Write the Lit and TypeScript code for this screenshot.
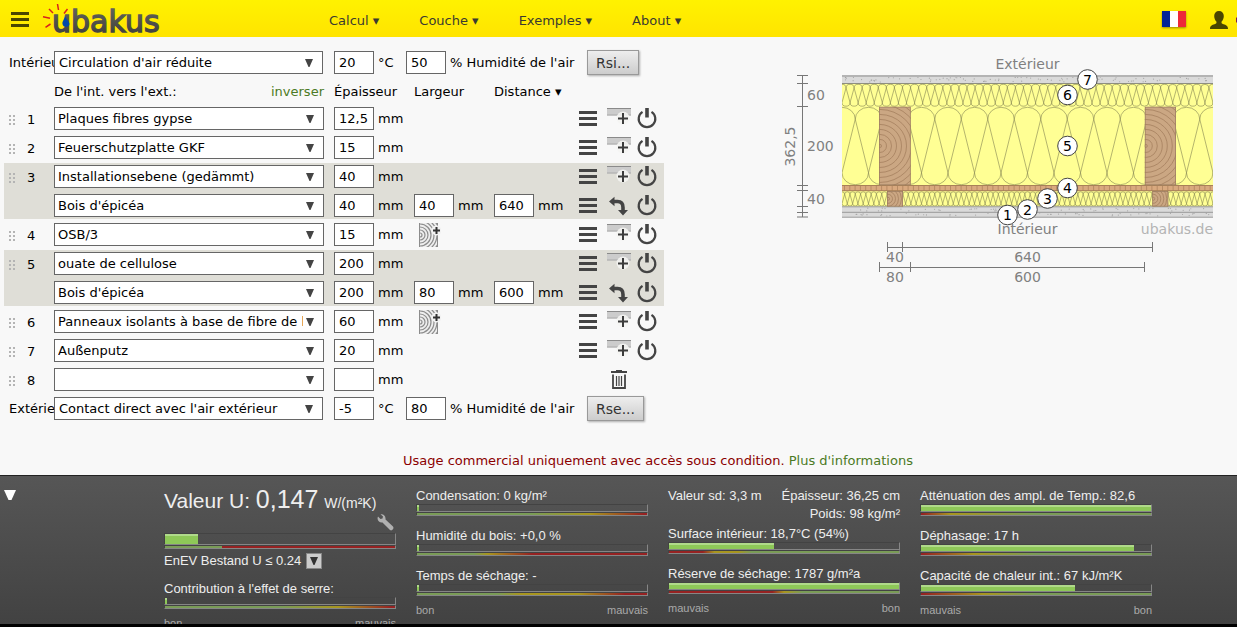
import { LitElement, html, svg, css, nothing } from "lit";
import { customElement, property } from "lit/decorators.js";

interface Layer {
  name: string;
  thickness: string;
  width?: string;
  distance?: string;
  canAddWood?: boolean;
  empty?: boolean;
}

interface Gauge {
  label: string;
  fill: number;
  scale: string;
}

const GROUPS: Layer[][] = [
  [{ name: "Plaques fibres gypse", thickness: "12,5" }],
  [{ name: "Feuerschutzplatte GKF", thickness: "15" }],
  [
    { name: "Installationsebene (gedämmt)", thickness: "40" },
    { name: "Bois d'épicéa", thickness: "40", width: "40", distance: "640" },
  ],
  [{ name: "OSB/3", thickness: "15", canAddWood: true }],
  [
    { name: "ouate de cellulose", thickness: "200" },
    { name: "Bois d'épicéa", thickness: "200", width: "80", distance: "600" },
  ],
  [{ name: "Panneaux isolants à base de fibre de bois", thickness: "60", canAddWood: true }],
  [{ name: "Außenputz", thickness: "20" }],
  [{ name: "", thickness: "", empty: true }],
];

const GREEN = "#7a9c57";
const AMBER = "#a8961f";
const RED = "#962222";

const reset = css`
  * { box-sizing: border-box; }
  :host { box-sizing: border-box; }
  button {
    font: inherit;
    color: inherit;
    background: none;
    border: 0;
    padding: 0;
    margin: 0;
    cursor: pointer;
  }
  svg { display: block; }
`;

@customElement("top-bar")
export class TopBar extends LitElement {
  static styles = [
    reset,
    css`
      :host {
        display: flex;
        align-items: center;
        height: 37px;
        background: linear-gradient(#fff200, #ffe400);
        color: #4a4600;
        font: 13px/20px "DejaVu Sans", sans-serif;
        overflow: hidden;
      }
      .brand { display: flex; align-items: center; width: 329px; padding-left: 11px; gap: 12px; }
      nav { display: flex; gap: 40px; flex: 1; padding-top: 4px; color: #3a3a30; }
      .account { display: flex; align-items: center; gap: 24px; }
      .flag { box-shadow: 0 1px 2px rgba(0, 0, 0, 0.4); }
      .user { display: flex; gap: 8px; align-items: center; padding-top: 2px; }
      .logo { font: 30px "DejaVu Sans", sans-serif; }
    `,
  ];

  render() {
    return html`
      <div class="brand">
        <button aria-label="Menu">
          <svg width="18" height="16" viewBox="0 0 18 16" fill="#4a4500">
            <path d="M0 1h18v3H0zM0 7h18v3H0zM0 13h18v3H0z" />
          </svg>
        </button>
        <a href="#" aria-label="ubakus">
          <svg width="120" height="37" viewBox="41 0 120 37">
            <defs>
              <linearGradient id="ink" x1="0" y1="0" x2="0" y2="1">
                <stop offset="0" stop-color="#686860" />
                <stop offset="1" stop-color="#3c3c38" />
              </linearGradient>
            </defs>
            <g stroke="#d8201c" stroke-width="1.5">
              <path d="M49 9l4 4M57.500 4l1 6M67.500 9l-3.500 4.500M43 16.800l7 1.400M45.500 27.300l5-3.300" />
            </g>
            <text class="logo" x="52" y="31.500" fill="url(#ink)" stroke="url(#ink)" stroke-width="1.400">ubakus</text>
            <path d="M65 15c-.5 5-3 6-2.500 9c.5 4 7 3.500 7 0c0-3-3.500-4-4.500-9z" fill="#0048a8" />
          </svg>
        </a>
      </div>
      <nav>
        <button>Calcul ▾</button>
        <button>Couche ▾</button>
        <button>Exemples ▾</button>
        <button>About ▾</button>
      </nav>
      <div class="account">
        <button class="flag" aria-label="Français">
          <svg width="24" height="16" viewBox="0 0 24 16">
            <path fill="#002395" d="M0 0h8v16H0z" />
            <path fill="#fff" d="M8 0h8v16H8z" />
            <path fill="#ed2939" d="M16 0h8v16h-8z" />
          </svg>
        </button>
        <div class="user">
          <button aria-label="Compte">
            <svg width="18" height="18" viewBox="0 0 18 18" fill="#4a4500">
              <path d="M9 0c3 0 4.800 2 4.800 5c0 2.500-1 4.500-2.300 5.700c0 1.600.3 2 2 2.500c2.500.8 4.500 1.300 4.500 4.800H0c0-3.500 2-4 4.500-4.800c1.700-.5 2-.9 2-2.500C5.200 9.500 4.200 7.500 4.200 5C4.200 2 6 0 9 0z" />
            </svg>
          </button>
          <svg width="1" height="6" viewBox="0 0 1 6"><circle cx="2.500" cy="3" r="3" fill="#80204a" /></svg>
        </div>
      </div>
    `;
  }
}

const burgerIcon = svg`<svg width="18" height="15" viewBox="0 0 18 15" fill="#444"><path d="M0 0h18v3H0zM0 6h18v3H0zM0 12h18v3H0z"/></svg>`;
const insertIcon = svg`<svg width="24" height="22" viewBox="0 0 24 22">
  <path fill="#ccc" d="M0 0h24v7.500H0z"/>
  <path fill="#aaa" d="M0 6.500h24v1H0z"/>
  <circle cx="16" cy="10" r="6.500" fill="#f4f4f2" fill-opacity=".9"/>
  <path fill="#8a8a8a" d="M0 0h24v1H0z"/>
  <path fill="#3c3c3c" d="M15 5h2v4.500h4v2h-4V16h-2v-4.500h-4v-2h4z"/></svg>`;
const powerIcon = svg`<svg width="20" height="22" viewBox="0 0 20 22" fill="none" stroke="#444">
  <path stroke-width="2.200" d="M5.500 3.900A8.300 8.300 0 1 0 14.500 3.900"/>
  <path stroke-width="3.600" d="M10 0v9.500"/></svg>`;
const swapIcon = svg`<svg width="20" height="20" viewBox="0 0 20 20">
  <path fill="none" stroke="#444" stroke-width="3.600" d="M4 5.500h4.500c4 0 5.500 2 5.500 6v3"/>
  <path fill="#444" d="M0 5.500l5.500-4.700v9.400zM9 14h10l-5 5.500z"/></svg>`;
const trashIcon = svg`<svg width="16" height="20" viewBox="0 0 16 20" fill="none" stroke="#444">
  <path stroke-width="2" d="M0 2h16"/><path stroke-width="1.500" d="M5 .7h6"/>
  <path stroke-width="1.800" d="M2 4.500V18h12V4.500"/>
  <path stroke-width="1.200" d="M5.500 6v10M8 6v10M10.500 6v10"/></svg>`;
const woodIcon = svg`<svg width="22" height="24" viewBox="0 0 22 24" fill="none" stroke="#8c8c8c">
  <defs><clipPath id="w"><path d="M0 0h19v24H0z"/></clipPath></defs>
  <g clip-path="url(#w)" stroke-width="1.200">
    <path fill="#eee" stroke-width="1" d="M.5-1v26h18v-26z"/>
    <circle cx="1" cy="12" r="2"/><circle cx="1" cy="12" r="5"/><circle cx="1" cy="12" r="8"/><circle cx="1" cy="12" r="11"/>
    <circle cx="1" cy="12" r="14"/><circle cx="1" cy="12" r="17"/><circle cx="1" cy="12" r="20"/>
  </g>
  <circle cx="17.500" cy="7.500" r="5" fill="#f2f2f2" stroke="none"/>
  <path stroke="#333" stroke-width="2" d="M17.500 4v7M14 7.500h7"/></svg>`;
const arrowIcon = svg`<svg width="8" height="8" viewBox="0 0 8 8" fill="#444"><path d="M0 0h8L4.500 8h-1z"/></svg>`;

@customElement("layer-editor")
export class LayerEditor extends LitElement {
  static styles = [
    reset,
    css`
      :host {
        display: flex;
        flex-direction: column;
        gap: 2px;
        width: 660px;
        flex: none;
        color: #000;
        font: 13px/20px "DejaVu Sans", sans-serif;
      }
      .row, .head { display: grid; grid-template-columns: 50px 280px 80px 80px 80px 1fr; align-items: center; height: 27px; }
      .head { height: 25px; padding-top: 2px; }
      .ambient { display: grid; grid-template-columns: 50px 280px 72px 181px 1fr; align-items: center; height: 27px; }
      .ambient .side { padding-left: 5px; overflow: hidden; }
      .head .title { display: flex; justify-content: space-between; width: 270px; }
      .link { color: #4b7a24; }
      .head button { text-align: left; }
      .group { display: flex; flex-direction: column; gap: 2px; }
      .shaded { background: #dfded7; }
      .tag { display: flex; align-items: center; gap: 12px; padding: 2px 0 0 5px; }
      .grip { display: grid; grid-template-columns: 2px 2px; gap: 2px; }
      .grip i { width: 2px; height: 2px; background: #b4b4b4; }
      .pick { display: grid; grid-template-columns: 1fr 18px; align-items: center; width: 270px; }
      .pick select {
        grid-area: 1 / 1 / 2 / 3;
        appearance: none;
        width: 100%;
        height: 23px;
        margin: 0;
        padding: 0 20px 0 3px;
        border: 1px solid #666;
        border-radius: 0;
        background: #fff;
        color: #000;
        font: inherit;
      }
      .pick svg { grid-area: 1 / 2; pointer-events: none; }
      .ambient .pick { width: 269px; }
      .ambient .pick select { padding-left: 4px; }
      .field { display: flex; align-items: center; gap: 4px; white-space: nowrap; }
      .field input {
        width: 40px;
        height: 23px;
        margin: 0;
        padding: 0 4px;
        border: 1px solid #666;
        border-radius: 0;
        background: #fff;
        color: #000;
        font: inherit;
      }
      .tools { display: grid; grid-template-columns: 28px 34px 22px; justify-items: center; align-items: center; }
      .trash { grid-column: 2; }
      .wood { padding-left: 5px; justify-self: start; }
      .resist {
        justify-self: start;
        height: 25px;
        padding: 0 8px;
        border: 1px solid #999;
        background: linear-gradient(#eee, #ccc);
        box-shadow: 1px 1px 2px rgba(0, 0, 0, 0.3);
        color: #333;
        font-size: 14px;
      }
    `,
  ];

  private pick(value: string, label: string) {
    return html`<div class="pick">
      <select aria-label=${label}><option>${value}</option></select>
      ${arrowIcon}
    </div>`;
  }

  private field(value: string, unit: string, label: string) {
    return html`<label class="field"><input aria-label=${label} .value=${value} />${unit}</label>`;
  }

  private ambient(side: string, contact: string, temp: string, humidity: string, button: string) {
    return html`<div class="ambient">
      <span class="side">${side}</span>
      ${this.pick(contact, side)}
      ${this.field(temp, "°C", "Température")}
      ${this.field(humidity, "% Humidité de l'air", "Humidité de l'air")}
      <button class="resist">${button}</button>
    </div>`;
  }

  private row(layer: Layer, index: number, first: boolean) {
    return html`<div class="row">
      <div class="tag">
        ${first
          ? html`<span class="grip"><i></i><i></i><i></i><i></i><i></i><i></i></span><span>${index + 1}</span>`
          : nothing}
      </div>
      ${this.pick(layer.name, `Couche ${index + 1}`)}
      ${this.field(layer.thickness, "mm", "Épaisseur")}
      ${layer.width
        ? this.field(layer.width, "mm", "Largeur")
        : layer.canAddWood
          ? html`<button class="wood" aria-label="Ajouter du bois">${woodIcon}</button>`
          : html`<span></span>`}
      ${layer.distance ? this.field(layer.distance, "mm", "Distance") : html`<span></span>`}
      <div class="tools">
        ${layer.empty
          ? html`<button class="trash" aria-label="Supprimer">${trashIcon}</button>`
          : html`<button aria-label="Options">${burgerIcon}</button>
              <button aria-label=${first ? "Insérer" : "Tourner"}>${first ? insertIcon : swapIcon}</button>
              <button aria-label="Activer">${powerIcon}</button>`}
      </div>
    </div>`;
  }

  render() {
    return html`
      ${this.ambient("Intérieur", "Circulation d'air réduite", "20", "50", "Rsi...")}
      <div class="head">
        <span></span>
        <span class="title">De l'int. vers l'ext.: <button class="link">inverser</button></span>
        <span>Épaisseur</span><span>Largeur</span><button>Distance ▾</button>
      </div>
      ${GROUPS.map(
        (group, i) => html`<div class="group ${group.length > 1 ? "shaded" : ""}">
          ${group.map((layer, j) => this.row(layer, i, j === 0))}
        </div>`,
      )}
      ${this.ambient("Extérieur", "Contact direct avec l'air extérieur", "-5", "80", "Rse...")}
    `;
  }
}

const LEFT = 842;
const SPAN = 371;

/** Continuous loop hatch of an insulation layer between two heights. */
function hatch(top: number, bottom: number, count: number) {
  const p = SPAN / count;
  const r = p / 2;
  const ry = r * 0.9;
  const t = top + 0.8 + ry;
  const b = bottom - 0.8 - ry;
  let d = `M${LEFT - r} ${t}`;
  for (let i = 0; i <= count; i++) {
    const c = LEFT + i * p;
    d += `A${r} ${ry} 0 0 1 ${c + r} ${t}L${c} ${b}A${r} ${ry} 0 0 0 ${c + p} ${b}L${c + r} ${t}`;
  }
  return svg`<path d=${d} fill="none" stroke="#76764a" stroke-opacity="0.6" stroke-width="0.9"/>`;
}

/** Timber cross-section with growth rings centred on its left edge. */
function beam(id: string, x: number, y: number, w: number, h: number, step: number) {
  const rings = Array.from({ length: Math.ceil(Math.hypot(w, h / 2) / step) }, (_, i) => 1.5 + i * step);
  return svg`
    <clipPath id=${id}><rect x=${x} y=${y} width=${w} height=${h}/></clipPath>
    <g clip-path="url(#${id})">
      <rect x=${x} y=${y} width=${w} height=${h} fill="#cba783"/>
      ${rings.map((r) => svg`<circle cx=${x + 1} cy=${y + h / 2} r=${r} fill="none" stroke="#a98563" stroke-width="0.9"/>`)}
      <rect x=${x} y=${y} width=${w} height=${h} fill="none" stroke="#9c7c60" stroke-width="1.5"/>
    </g>`;
}

/** Scattered grains of a mineral layer. */
function specks(y: number, h: number, count: number, seed: number) {
  const noise = (n: number) => {
    const v = Math.sin(n * 127.1 + seed * 311.7) * 43758.5453;
    return v - Math.floor(v);
  };
  return Array.from(
    { length: count },
    (_, i) => svg`<circle cx=${LEFT + noise(i) * SPAN} cy=${y + 1 + noise(i + 500) * (h - 2)} r="0.6" fill="#a4a4a4"/>`,
  );
}

@customElement("wall-section")
export class WallSection extends LitElement {
  static styles = [
    reset,
    css`
      :host { display: block; }
      .label { font: 14px "DejaVu Sans", sans-serif; fill: #808080; }
      .mid { text-anchor: middle; }
      .end { text-anchor: end; fill: #b4b4b4; }
      .pin { font: 14px "DejaVu Sans", sans-serif; text-anchor: middle; fill: #000; }
      .dim { stroke: #777; stroke-width: 1; fill: none; }
    `,
  ];

  render() {
    const pins: [number, number][] = [
      [1007.5, 215], [1027.5, 209.5], [1047.5, 198.5], [1067.5, 188], [1067.5, 146], [1067.5, 95], [1087.5, 79.5],
    ];
    const strands = Array.from({ length: 70 }, (_, i) => `M${LEFT + 2.5 + i * 5.3} 186v5`).join("");
    return html`<svg width="432" height="237" viewBox="782 49 432 237" role="img" aria-label="Coupe de la paroi">
      <clipPath id="wall"><rect x=${LEFT} y="75" width=${SPAN} height="143" /></clipPath>
      <text class="label mid" x="1027.500" y="69">Extérieur</text>
      <g clip-path="url(#wall)">
        <rect x=${LEFT} y="75" width=${SPAN} height="8.500" fill="#dadada" />
        ${specks(76, 7, 90, 2)}
        <rect x=${LEFT} y="83" width=${SPAN} height="124" fill="#ffff94" />
        <path d="M842 76h371" stroke="#b4b4b4" stroke-width="2" />
        <path d="M842 83.500h371" stroke="#8f8f80" />
        ${hatch(83.5, 107, 46)}
        ${hatch(106.5, 185.5, 14)}
        ${hatch(191, 206.8, 70)}
        <rect x=${LEFT} y="185" width=${SPAN} height="6" fill="#d9a97e" />
        <path d=${strands} stroke="#b88b64" />
        <path d="M842 185.500h371M842 190.700h371" stroke="#a88058" />
        <rect x=${LEFT} y="206.500" width=${SPAN} height="11.500" fill="#dadada" />
        ${specks(207, 5, 50, 4)} ${specks(212, 5, 50, 1)}
        <path d="M842 206.800h371M842 212.300h371" stroke="#999" />
        <path d="M842 217.300h371" stroke="#b4b4b4" stroke-width="1.500" />
        ${beam("b1", 879, 106.7, 31.7, 78.5, 5)} ${beam("b2", 1144.8, 106.7, 31.2, 78.5, 5)}
        ${beam("b3", 887, 191, 16, 15.6, 3)} ${beam("b4", 1152.3, 191, 16, 15.6, 3)}
      </g>
      <path class="dim" d="M802.500 75v142M797 75.500h11M797 83.500h11M797 106.500h11M797 185.500h11M797 190.500h11M797 206.500h11M797 212.500h11M797 217h11" />
      <text class="label" x="807" y="100">60</text>
      <text class="label" x="807" y="151">200</text>
      <text class="label" x="807" y="204">40</text>
      <text class="label mid" transform="translate(795 146.500) rotate(-90)">362,5</text>
      <text class="label mid" x="1027.500" y="234">Intérieur</text>
      <text class="label end" x="1213" y="234">ubakus.de</text>
      <path class="dim" d="M887 247.500h266M887.500 242v10M902.500 242v10M1152.500 242v10M879 267.500h266M879.500 262v10M910.500 262v10M1144.500 262v10" />
      <text class="label mid" x="895" y="262">40</text>
      <text class="label mid" x="1027.500" y="262">640</text>
      <text class="label mid" x="895" y="282">80</text>
      <text class="label mid" x="1027.500" y="282">600</text>
      ${pins.map(
        ([x, y], i) => svg`<circle cx=${x} cy=${y} r="9.8" fill="#fff" stroke="#444"/><text class="pin" x=${x} y=${y + 5}>${i + 1}</text>`,
      )}
    </svg>`;
  }
}

@customElement("level-gauge")
export class LevelGauge extends LitElement {
  @property({ type: Number }) fill = 0;
  @property() scale = "";
  @property({ type: Boolean, reflect: true }) tall = false;

  static styles = css`
    :host { display: block; }
    .bar, .scale {
      box-sizing: border-box;
      border: solid;
      border-width: 1px;
      border-color: #434343 #868686 #868686 #434343;
      background-origin: border-box;
    }
    .bar { height: 8px; }
    :host([tall]) .bar { height: 12px; }
    .scale { height: 4px; }
    .level { height: 100%; background: linear-gradient(#b0da8a 2px, #8ec858 2px); }
  `;

  render() {
    return html`
      <div class="bar"><div class="level" style="width:${this.fill}%"></div></div>
      <div class="scale" style="background-image:linear-gradient(90deg, ${this.scale})"></div>
    `;
  }
}

@customElement("result-panel")
export class ResultPanel extends LitElement {
  static styles = [
    reset,
    css`
      :host {
        display: flex;
        flex: none;
        height: 152px;
        overflow: hidden;
        border-top: 1px solid #222;
        border-bottom: 3px solid #000;
        background: linear-gradient(#565656, #424242);
        color: #eee;
        font: 13px/18px "Liberation Sans", Arial, sans-serif;
      }
      .fold { width: 79px; padding: 14px 4px; flex: none; }
      .fold button { display: block; }
      .columns { flex: 1; display: grid; grid-template-columns: repeat(4, 232px); justify-content: center; gap: 20px; }
      .column { padding-top: 10px; }
      .item + .item { margin-top: 10px; }
      .caption { height: 18px; line-height: 20px; }
      .ends { display: flex; justify-content: space-between; margin-top: 8px; color: #aaa; font-size: 11px; line-height: 12px; }
      .uvalue { height: 26px; font-size: 21px; line-height: 26px; white-space: nowrap; }
      .uvalue b { font-size: 25px; font-weight: 400; }
      .uvalue small { font-size: 14px; }
      .wrench { display: block; margin: 2px 2px 2px auto; }
      .norm { display: flex; align-items: center; gap: 5px; height: 24px; margin-bottom: 6px; }
      .more { width: 16px; height: 16px; background: #ccc; border: 1px solid #888; padding: 3px; }
      .facts { display: flex; flex-wrap: wrap; justify-content: space-between; padding-top: 1px; margin-bottom: 1px; }
      .facts span:last-child { margin-left: auto; }
    `,
  ];

  private gauge({ label, fill, scale }: Gauge) {
    return html`<div class="item">
      <div class="caption">${label}</div>
      <level-gauge .fill=${fill} .scale=${scale}></level-gauge>
    </div>`;
  }

  private ends(a: string, b: string) {
    return html`<div class="ends"><span>${a}</span><span>${b}</span></div>`;
  }

  render() {
    const greenToRed = `${GREEN} 50%, ${AMBER} 75%, ${RED} 98%`;
    return html`
      <div class="fold">
        <button aria-label="Replier">
          <svg width="12" height="10" viewBox="0 0 12 10" fill="#fff"><path d="M0 0h12L7.500 10h-3z" /></svg>
        </button>
      </div>
      <div class="columns">
        <div class="column">
          <div class="uvalue">Valeur U: <b>0,147</b> <small>W/(m²K)</small></div>
          <button class="wrench" aria-label="Réglages">
            <svg width="17" height="17" viewBox="0 0 17 17" fill="#b0b0b0">
              <path d="M1 2.500L3.500 5L5.500 4.500L6 2.500L3.500.3C6 -.5 9 1.500 8.500 5.500L16 12.500C17.500 14.500 15 17.500 13 16L5.500 8.500C2 9 -.5 6 1 2.500z" />
            </svg>
          </button>
          <level-gauge tall .fill=${14.5} .scale=${`${GREEN} 25%, ${RED} 25%`}></level-gauge>
          <div class="norm">EnEV Bestand U ≤ 0.24
            <button class="more" aria-label="Choisir la norme">
              <svg width="8" height="8" viewBox="0 0 8 8" fill="#333"><path d="M0 0h8L4.500 8h-1z" /></svg>
            </button>
          </div>
          ${this.gauge({ label: "Contribution à l'effet de serre:", fill: 1, scale: greenToRed })}
          ${this.ends("bon", "mauvais")}
        </div>
        <div class="column">
          ${this.gauge({ label: "Condensation: 0 kg/m²", fill: 1, scale: greenToRed })}
          ${this.gauge({ label: "Humidité du bois: +0,0 %", fill: 1, scale: `${GREEN} 25%, ${AMBER} 31%, ${RED} 50%` })}
          ${this.gauge({ label: "Temps de séchage: -", fill: 1, scale: `${GREEN} 35%, ${AMBER} 45%, ${AMBER} 70%, ${RED} 90%` })}
          ${this.ends("bon", "mauvais")}
        </div>
        <div class="column">
          <div class="facts"><span>Valeur sd: 3,3 m</span><span>Épaisseur: 36,25 cm</span><span>Poids: 98 kg/m²</span></div>
          ${this.gauge({ label: "Surface intérieur: 18,7°C (54%)", fill: 45.5, scale: `${RED} 15%, ${AMBER} 20%, ${AMBER} 30%, ${GREEN} 36%` })}
          ${this.gauge({ label: "Réserve de séchage: 1787 g/m²a", fill: 100, scale: `${RED} 45%, ${AMBER} 50%, ${GREEN} 58%` })}
          ${this.ends("mauvais", "bon")}
        </div>
        <div class="column">
          ${this.gauge({ label: "Atténuation des ampl. de Temp.: 82,6", fill: 100, scale: `${RED} 1%, ${AMBER} 13%, ${GREEN} 50%` })}
          ${this.gauge({ label: "Déphasage: 17 h", fill: 92.5, scale: `${RED} 1%, ${AMBER} 23%, ${GREEN} 50%` })}
          ${this.gauge({ label: "Capacité de chaleur int.: 67 kJ/m²K", fill: 67, scale: `${RED} 1%, ${AMBER} 27%, ${GREEN} 50%` })}
          ${this.ends("mauvais", "bon")}
        </div>
      </div>
    `;
  }
}

@customElement("app-root")
export class AppRoot extends LitElement {
  static styles = css`
    :host {
      display: flex;
      flex-direction: column;
      height: 100vh;
      background: #f8f8f8;
      font: 13px/20px "DejaVu Sans", sans-serif;
    }
    main { flex: 1; min-height: 0; overflow: hidden; }
    .work { display: flex; justify-content: space-between; padding: 12px 23px 0 4px; }
    .notice { margin: 29px 0 0; padding-left: 79px; text-align: center; color: #8b0000; }
    .notice a { color: #4b7a24; text-decoration: none; }
  `;

  render() {
    return html`
      <top-bar></top-bar>
      <main>
        <div class="work">
          <layer-editor></layer-editor>
          <wall-section></wall-section>
        </div>
        <p class="notice">Usage commercial uniquement avec accès sous condition. <a href="#">Plus d'informations</a></p>
      </main>
      <result-panel></result-panel>
    `;
  }
}
